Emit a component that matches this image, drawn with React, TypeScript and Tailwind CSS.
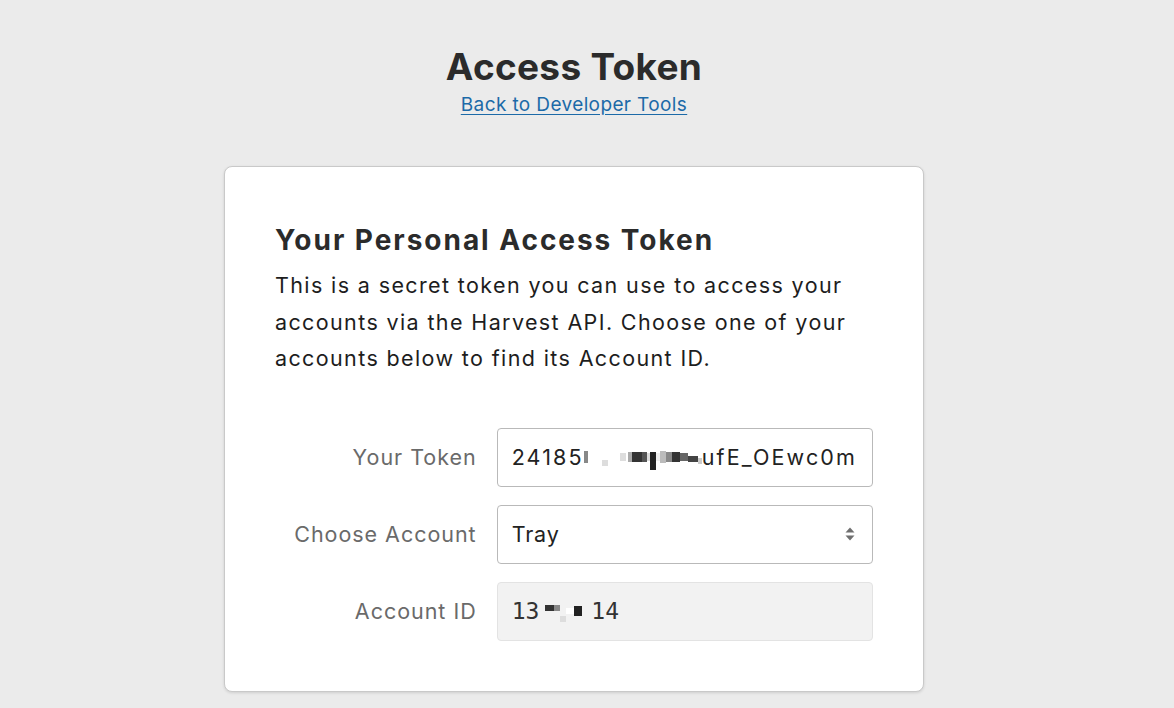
import React from "react";

const Px = ({ c, w, h = 8, dy = 0 }: { c: string; w: number; h?: number; dy?: number }) => (
  <span className="inline-block shrink-0" style={{ width: w, height: h, background: c, transform: `translateY(${dy}px)` }} />
);

export default function App() {
  return (
    <div className="min-h-[708px] w-full bg-[#ebebeb] text-[#1d1d1d]" style={{ fontFamily: "Inter, 'Noto Sans', sans-serif" }}>
      <div className="w-[calc(100%-26px)] pb-[16px]">
        <div className="flex flex-col items-center pt-[44px]">
          <h1 className="text-[37px] font-bold leading-[46px] tracking-[0.3px] text-[#2b2b2b]">Access Token</h1>
          <a href="#" className="mt-[2px] text-[19px] leading-[26px] tracking-[0.02em] text-[#1c6aa8] underline underline-offset-[3px]">Back to Developer Tools</a>
        </div>
        <div className="mx-auto mt-[48px] w-[700px] rounded-[8px] border border-[#c9c9c9] bg-white px-[50px] pt-[53px] pb-[50px] shadow-[0_1px_3px_rgba(0,0,0,0.12)]">
          <h2 className="text-[28px] font-bold leading-[40px] tracking-[0.07em] text-[#2b2b2b]">Your Personal Access Token</h2>
          <p className="mt-[7px] text-[21.5px] leading-[36.5px] tracking-[0.064em] text-[#1d1d1d]">
            This is a secret token you can use to access your accounts via the Harvest API. Choose one of your accounts below to find its Account ID.
          </p>
          <div className="mt-[51px] flex flex-col gap-[18px]">
            <div className="flex items-center gap-[20px]">
              <label className="w-[202px] text-right text-[21.5px] tracking-[0.045em] text-[#6a6a6a]">Your Token</label>
              <div className="flex h-[59px] w-[377px] items-center rounded-[4px] border border-[#b9b9b9] px-[14px] text-[21.5px] tracking-[0.1em] text-[#222]">
                <span>24185</span>
                <span className="inline-flex items-center">
                  <Px c="#888" w={4} h={12} />
                  <Px c="#fff" w={14} />
                  <Px c="#ddd" w={6} h={6} dy={6} />
                  <Px c="#fff" w={12} />
                  <Px c="#ddd" w={6} h={8} />
                  <Px c="#fff" w={2} />
                  <Px c="#aaa" w={4} h={10} />
                  <Px c="#333" w={10} h={10} />
                  <Px c="#555" w={5} h={10} />
                  <Px c="#ddd" w={3} h={8} />
                  <Px c="#222" w={6} h={18} dy={4} />
                  <Px c="#eee" w={4} h={8} />
                  <Px c="#bbb" w={6} h={12} />
                  <Px c="#888" w={6} h={10} />
                  <Px c="#333" w={8} h={10} />
                  <Px c="#666" w={8} h={8} />
                  <Px c="#444" w={10} h={6} dy={2} />
                  <Px c="#ccc" w={4} h={6} dy={4} />
                </span>
                <span>ufE_OEwc0m</span>
              </div>
            </div>
            <div className="flex items-center gap-[20px]">
              <label className="w-[202px] text-right text-[21.5px] tracking-[0.045em] text-[#6a6a6a]">Choose Account</label>
              <div className="flex h-[59px] w-[377px] items-center justify-between rounded-[4px] border border-[#b9b9b9] pl-[14px] pr-[16px] text-[21.5px] tracking-[0.04em] text-[#222]">
                <span>Tray</span>
                <svg width="12" height="18" viewBox="0 0 12 18">
                  <path d="M6 2.5 L10.5 7.5 H1.5 Z" fill="#6f6f6f" />
                  <path d="M6 15.5 L10.5 10.5 H1.5 Z" fill="#6f6f6f" />
                </svg>
              </div>
            </div>
            <div className="flex items-center gap-[20px]">
              <label className="w-[202px] text-right text-[21.5px] tracking-[0.045em] text-[#6a6a6a]">Account ID</label>
              <div className="flex h-[59px] w-[377px] items-center rounded-[4px] border border-[#e3e3e3] bg-[#f2f2f2] px-[14px] text-[23px] text-[#333]" style={{ fontFamily: "'DejaVu Sans Mono', 'Liberation Mono', monospace" }}>
                <span>13</span>
                <span className="inline-flex w-[52px] items-center pl-[6px]">
                  <Px c="#333" w={9} h={6} dy={-3} />
                  <Px c="#888" w={6} h={6} dy={-3} />
                  <Px c="#ddd" w={6} h={6} dy={8} />
                  <Px c="#fff" w={8} h={6} />
                  <Px c="#222" w={8} h={10} />
                </span>
                <span>14</span>
              </div>
            </div>
          </div>
        </div>
      </div>
    </div>
  );
}
